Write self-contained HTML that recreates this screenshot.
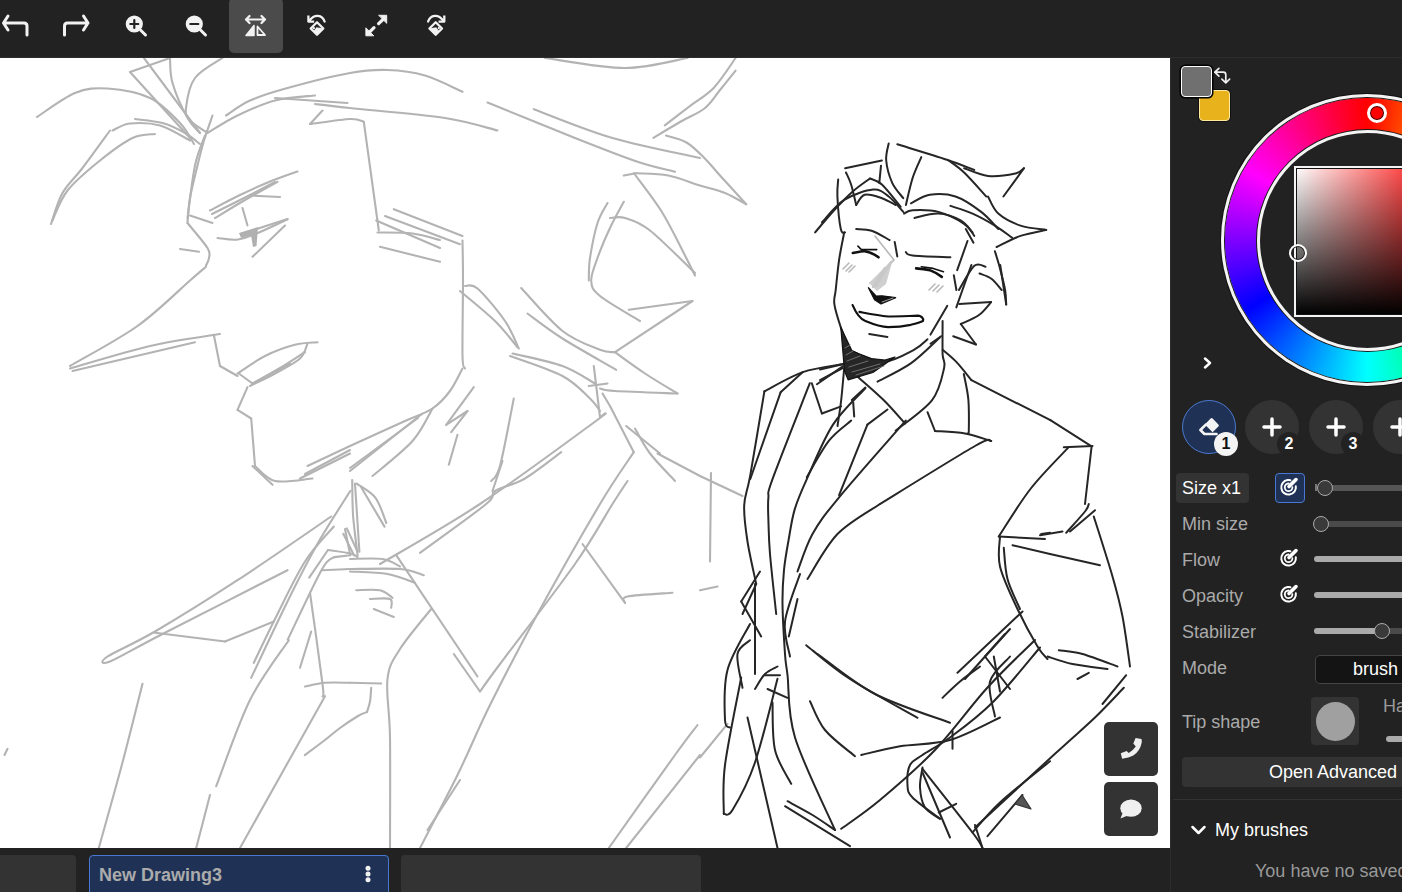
<!DOCTYPE html>
<html><head><meta charset="utf-8">
<style>
*{box-sizing:border-box;margin:0;padding:0}
html,body{width:1402px;height:892px;overflow:hidden;background:#222;font-family:"Liberation Sans",sans-serif;position:relative}
.abs{position:absolute}
#top{position:absolute;left:0;top:0;width:1402px;height:58px;background:#222;border-bottom:1px solid #2d2d2d}
.tb{position:absolute;top:-2px;width:54px;height:55px;border-radius:5px;background:#4b4b4b}
#canvas{position:absolute;left:0;top:58px;width:1170px;height:790px;background:#fff;overflow:hidden}
#side{position:absolute;left:1170px;top:58px;width:232px;height:834px;background:#222;border-left:1px solid #2c2c2c}
#bottom{position:absolute;left:0;top:848px;width:1170px;height:44px;background:#222}
.tab{position:absolute;top:7px;height:44px;background:#333;border-radius:4px}
.tab.act{background:#1f3256;border:1px solid #4a78d0}
.cbtn{position:absolute;left:1104px;width:54px;height:54px;background:#333;border-radius:5px}
.lbl{position:absolute;left:1182px;font-size:18px;color:#aaa;line-height:20px;white-space:nowrap}
.track{position:absolute;left:1314px;height:6px;border-radius:3px;background:#4a4a4a;width:120px}
.thumb{position:absolute;width:16px;height:16px;border-radius:50%;background:#3a3a3a;border:1.5px solid #aaa}
.slot{position:absolute;top:400px;width:54px;height:54px;border-radius:50%;background:#333}
.badge{position:absolute;top:432px;width:24px;height:24px;border-radius:50%;background:#222;color:#fff;font-weight:bold;font-size:16px;text-align:center;line-height:24px}
</style></head><body>
<div id="top"></div>
<div class="tb" style="left:229px"></div>
<svg class="abs" style="left:0;top:0" width="460" height="58" fill="none" stroke="#f2f2f2" stroke-width="3" stroke-linecap="round" stroke-linejoin="round">
  <!-- undo -->
  <path d="M8 16 L3.5 23 L8 30 M3.5 23 H24 Q27 23 27 26 V35"/>
  <!-- redo -->
  <path d="M83.5 16 L88 23 L83.5 30 M88 23 H67.5 Q64.5 23 64.5 26 V35"/>
  <!-- zoom in -->
  <circle cx="134.3" cy="24" r="8.6" fill="#f2f2f2" stroke="none"/>
  <path d="M140.5 30 L145.5 35" />
  <path d="M134.3 20 V28 M130.3 24 H138.3" stroke="#222" stroke-width="2.2"/>
  <!-- zoom out -->
  <circle cx="194.3" cy="24" r="8.6" fill="#f2f2f2" stroke="none"/>
  <path d="M200.5 30 L205.5 35" />
  <path d="M190.3 24 H198.3" stroke="#222" stroke-width="2.2"/>
  <!-- flip -->
  <path d="M246 19.5 H265 M249.5 16 L246 19.5 L249.5 23 M261.5 16 L265 19.5 L261.5 23" stroke-width="2.2"/>
  <path d="M254 25.5 V35.5 H246 Z" fill="#f2f2f2" stroke-width="1.5"/>
  <path d="M257.5 26.5 V35 H265 Z" stroke-width="1.8"/>
  <!-- rotate ccw -->
  <g id="rot">
  <path d="M309.5 20.5 Q313 15.5 318 15.8 Q323 16.3 324.6 21.5" stroke-width="2.3"/>
  <path d="M308.4 16.6 V21.6 H313" stroke-width="2.3" stroke-linecap="square"/>
  <path d="M317 22.2 L323.3 28.5 L317 34.8 L310.7 28.5 Z" stroke-width="2.3"/>
  <path d="M323.3 28.5 L317 34.8 L313.5 31.3 L316.5 27.2 Z" fill="#f2f2f2" stroke="none"/>
  <circle cx="313.9" cy="28.2" r="1.1" fill="#f2f2f2" stroke="none"/>
  </g>
  <!-- fullscreen -->
  <path d="M379 15.3 H386.7 V22.9 Z" fill="#f2f2f2" stroke="#f2f2f2" stroke-width="1"/>
  <path d="M383.5 19 L378.6 23.6" stroke-width="3.2" stroke-linecap="round"/>
  <path d="M365.9 28.2 V35.8 H373.4 Z" fill="#f2f2f2" stroke="#f2f2f2" stroke-width="1"/>
  <path d="M374 27.6 L369.3 32.3" stroke-width="3.2" stroke-linecap="round"/>
  <!-- rotate cw -->
  <use href="#rot" transform="translate(752.7 0) scale(-1 1)"/>
</svg>

<div id="canvas">
<svg id="art" width="1170" height="790" viewBox="0 58 1170 790" style="position:absolute;left:0;top:0" fill="none" stroke-linecap="round" stroke-linejoin="round"><g stroke="#b3b3b3" stroke-width="2.1"><path d="M37.0 117.0 C43.3 113.0 63.2 97.8 75.0 93.0 C86.8 88.2 95.0 87.7 107.5 88.5 C120.0 89.3 137.9 92.2 150.0 98.0 C162.1 103.8 172.7 115.3 180.0 123.0 C187.3 130.7 191.7 140.5 194.0 144.0"/><path d="M170.0 58.0 L130.0 72.0"/><path d="M130.0 72.0 L190.0 138.0"/><path d="M144.0 58.0 L200.0 133.0"/><path d="M170.0 58.0 C170.4 62.2 169.6 73.0 172.5 83.0 C175.4 93.0 182.9 109.7 187.5 118.0 C192.1 126.3 197.9 130.5 200.0 133.0"/><path d="M222.5 58.0 C217.9 61.3 201.1 69.7 195.0 78.0 C188.9 86.3 186.8 100.9 186.0 108.0 C185.2 115.1 186.4 116.3 190.0 120.5 C193.6 124.7 204.6 130.9 207.5 133.0"/><path d="M135.0 119.0 C139.6 119.7 154.2 120.7 162.5 123.0 C170.8 125.3 178.8 129.5 185.0 133.0 C191.2 136.5 197.5 142.2 200.0 144.0"/><path d="M112.5 130.5 C115.4 129.3 122.1 124.3 130.0 123.5 C137.9 122.7 150.0 122.7 160.0 125.5 C170.0 128.3 185.0 138.0 190.0 140.5"/><path d="M110.0 130.5 C105.4 136.8 90.4 157.6 82.5 168.0 C74.6 178.4 67.8 183.7 62.5 193.0 C57.2 202.3 52.9 218.8 51.0 224.0"/><path d="M155.0 134.0 C151.2 134.7 141.7 133.6 132.5 138.0 C123.3 142.4 110.8 151.8 100.0 160.5 C89.2 169.2 75.4 180.5 67.5 190.5 C59.6 200.5 55.0 215.5 52.5 220.5"/><path d="M226.0 115.5 C230.0 113.0 239.8 105.1 250.0 100.5 C260.2 95.9 270.8 92.6 287.5 88.0 C304.2 83.4 333.3 76.0 350.0 73.0 C366.7 70.0 375.0 69.6 387.5 70.0 C400.0 70.4 412.5 71.9 425.0 75.5 C437.5 79.1 456.2 89.1 462.5 91.8"/><path d="M207.5 133.0 C212.5 130.1 226.2 120.9 237.5 115.5 C248.8 110.1 262.1 103.8 275.0 100.5 C287.9 97.2 308.3 96.3 315.0 95.5"/><path d="M315.0 104.0 C320.8 104.7 328.3 105.7 350.0 108.0 C371.7 110.3 420.4 114.2 445.0 118.0 C469.6 121.8 488.8 128.4 497.5 130.5"/><path d="M275.0 98.0 L347.5 103.0"/><path d="M322.5 110.5 L310.0 124.0"/><path d="M310.0 124.0 C316.7 123.2 341.0 119.4 350.0 119.0 C359.0 118.6 361.5 121.3 363.8 121.8"/><path d="M363.8 121.8 L378.8 230.5"/><path d="M212.5 115.5 C211.1 119.7 206.5 132.2 204.0 140.5 C201.5 148.8 199.8 155.9 197.5 165.5 C195.2 175.1 191.7 188.4 190.0 198.0 C188.3 207.6 187.9 218.8 187.5 223.0"/><path d="M187.5 223.0 C190.8 227.2 203.9 242.2 207.5 248.0 C211.1 253.8 209.2 255.1 209.0 258.0 C208.8 260.9 206.5 264.2 206.0 265.5"/><path d="M205.0 135.5 C203.3 140.5 197.9 151.8 195.0 165.5 C192.1 179.2 188.8 209.2 187.5 218.0"/><path d="M190.0 215.5 L212.5 223.0"/><path d="M210.0 210.5 C215.0 207.9 229.6 200.0 240.0 195.0 C250.4 190.0 262.9 184.4 272.5 180.5 C282.1 176.6 293.3 173.0 297.5 171.5"/><path d="M215.0 218.0 C220.0 215.0 234.6 206.0 245.0 200.0 C255.4 194.0 272.1 184.8 277.5 181.8"/><path d="M212.0 214.0 C218.3 210.8 239.5 200.3 250.0 195.0 C260.5 189.7 270.8 184.2 275.0 182.0"/><path d="M250.0 195.5 L280.0 197.0"/><path d="M242.5 208.0 L247.5 225.5"/><path d="M217.5 238.0 C220.9 238.2 230.9 240.5 238.0 239.5 C245.1 238.5 251.7 235.4 260.0 232.0 C268.3 228.6 283.0 221.3 287.6 219.2"/><path d="M244.0 233.0 L287.5 219.0"/><path d="M252.5 256.8 L285.0 225.5"/><path d="M180.0 249.0 L199.0 251.8"/><path d="M206.0 266.8 C203.3 269.1 201.4 270.6 190.0 280.5 C178.6 290.4 157.5 311.8 137.5 326.0 C117.5 340.2 81.2 359.3 70.0 366.0"/><path d="M545.0 58.0 C558.3 59.7 601.2 68.0 625.0 68.0 C648.8 68.0 677.1 59.7 687.5 58.0"/><path d="M487.5 102.5 C502.1 108.4 550.0 128.1 575.0 138.0 C600.0 147.9 620.8 156.1 637.5 161.8 C654.2 167.4 668.8 170.1 675.0 171.8"/><path d="M533.8 109.2 C546.9 114.0 584.8 129.9 612.5 138.0 C640.2 146.1 685.4 154.7 700.0 158.0"/><path d="M664.8 125.3 C669.0 122.1 681.8 112.3 690.0 106.0 C698.2 99.7 706.3 95.7 713.9 87.7 C721.5 79.7 732.0 63.0 735.6 58.0"/><path d="M653.4 137.9 C657.8 135.2 671.4 127.0 680.0 122.0 C688.6 117.0 698.1 113.5 704.8 108.2 C711.5 102.9 714.9 96.3 720.0 90.0 C725.1 83.7 733.0 73.8 735.6 70.6"/><path d="M666.0 135.6 C669.4 136.8 680.0 138.7 686.5 142.5 C693.0 146.3 699.2 152.9 704.8 158.4 C710.4 163.9 713.1 167.9 720.0 175.5 C726.9 183.1 741.9 199.5 746.2 204.2"/><path d="M623.7 175.5 L636.3 173.3"/><path d="M636.3 173.3 C641.6 173.7 657.7 173.5 668.3 175.5 C678.9 177.5 690.5 182.6 700.0 185.5 C709.5 188.4 717.3 189.9 725.0 193.0 C732.7 196.1 742.7 202.4 746.2 204.2"/><path d="M633.8 173.0 C638.5 179.7 654.0 199.2 662.5 213.0 C671.0 226.8 679.6 245.1 685.0 255.5 C690.4 265.9 693.3 272.2 695.0 275.5"/><path d="M610.0 218.0 C612.5 218.0 618.3 215.9 625.0 218.0 C631.7 220.1 638.3 221.3 650.0 230.5 C661.7 239.7 687.5 265.9 695.0 273.0"/><path d="M607.5 203.0 C605.8 206.3 600.4 213.8 597.5 223.0 C594.6 232.2 591.5 248.4 590.0 258.0 C588.5 267.6 589.0 276.8 588.8 280.5"/><path d="M623.8 201.8 C621.5 206.1 614.4 218.6 610.0 228.0 C605.6 237.4 600.6 249.2 597.5 258.0 C594.4 266.8 590.8 274.7 591.2 281.0 C591.7 287.3 591.9 289.3 600.0 296.0 C608.1 302.7 633.3 316.8 640.0 321.0"/><path d="M393.8 209.2 L462.5 236.0"/><path d="M385.0 216.0 L460.0 244.2"/><path d="M376.2 220.5 L440.0 248.0"/><path d="M377.5 232.5 C383.3 232.7 402.1 232.2 412.5 233.5 C422.9 234.8 435.4 238.9 440.0 240.0"/><path d="M380.0 246.8 L440.0 261.8"/><path d="M70.0 368.5 C83.3 364.8 125.0 351.8 150.0 346.0 C175.0 340.2 208.3 336.0 220.0 334.0"/><path d="M72.5 371.0 L195.0 342.2"/><path d="M213.8 334.8 L220.0 366.0"/><path d="M220.0 366.0 L237.5 376.0"/><path d="M237.5 373.5 C242.1 370.6 255.4 360.8 265.0 356.0 C274.6 351.2 286.2 347.0 295.0 344.8 C303.8 342.5 313.8 342.7 317.5 342.2"/><path d="M250.0 386.0 C254.2 383.9 266.7 378.1 275.0 373.5 C283.3 368.9 294.6 363.5 300.0 358.5 C305.4 353.5 306.2 346.0 307.5 343.5"/><path d="M252.0 384.0 C256.7 381.3 271.2 373.3 280.0 368.0 C288.8 362.7 300.8 354.7 305.0 352.0"/><path d="M238.8 373.5 L252.5 383.5"/><path d="M252.5 383.5 L290.0 363.5"/><path d="M247.5 387.2 L237.5 409.8"/><path d="M237.5 409.8 L251.2 418.5"/><path d="M251.2 418.5 L255.0 466.0"/><path d="M255.0 466.0 C258.3 468.5 265.4 478.9 275.0 481.0 C284.6 483.1 306.2 478.9 312.5 478.5"/><path d="M252.5 466.0 L272.5 484.8"/><path d="M300.0 478.5 L350.0 453.5"/><path d="M305.0 474.0 L350.0 450.0"/><path d="M462.5 240.5 C462.6 247.2 463.0 261.2 463.0 280.5 C463.0 299.8 462.2 341.3 462.5 356.0 C462.8 370.7 464.6 366.4 465.0 368.5"/><path d="M460.0 291.0 C465.8 296.0 485.4 311.6 495.0 321.0 C504.6 330.4 513.8 342.9 517.5 347.2"/><path d="M465.0 286.0 C467.1 286.4 470.8 282.7 477.5 288.5 C484.2 294.3 498.1 311.0 505.0 321.0 C511.9 331.0 516.5 343.9 518.8 348.5"/><path d="M521.2 288.0 C528.1 295.2 549.4 320.7 562.5 331.0 C575.6 341.3 591.2 346.2 600.0 349.8 C608.8 353.3 612.5 351.8 615.0 352.2"/><path d="M615.0 352.2 L692.5 301.0"/><path d="M692.5 301.0 L628.8 309.8"/><path d="M527.5 313.5 C533.3 317.7 547.7 329.1 562.5 338.5 C577.3 347.9 607.3 364.5 616.2 369.8"/><path d="M615.0 352.2 C620.0 355.8 634.6 366.6 645.0 373.5 C655.4 380.4 672.1 390.2 677.5 393.5"/><path d="M677.5 393.5 C667.1 393.1 627.9 391.8 615.0 391.0 C602.1 390.2 602.5 388.9 600.0 388.5"/><path d="M512.5 353.5 C520.8 355.6 548.8 361.0 562.5 366.0 C576.2 371.0 589.6 380.6 595.0 383.5"/><path d="M510.0 356.0 C518.8 359.3 549.2 368.9 562.5 376.0 C575.8 383.1 583.8 392.7 590.0 398.5 C596.2 404.3 598.3 408.9 600.0 411.0"/><path d="M593.8 366.0 L600.0 417.2"/><path d="M600.0 417.2 L605.0 413.5"/><path d="M588.8 386.0 L607.5 383.5"/><path d="M462.5 368.5 C460.4 372.2 455.0 384.3 450.0 391.0 C445.0 397.7 440.0 403.5 432.5 408.5 C425.0 413.5 418.8 414.8 405.0 421.0 C391.2 427.2 366.2 438.5 350.0 446.0 C333.8 453.5 314.6 462.7 307.5 466.0"/><path d="M432.5 408.5 C429.2 413.9 422.5 429.8 412.5 441.0 C402.5 452.2 379.2 470.2 372.5 476.0"/><path d="M422.5 413.5 L350.0 471.0"/><path d="M418.0 418.0 L350.0 468.0"/><path d="M473.8 387.2 L446.2 424.8"/><path d="M446.2 424.8 L467.5 411.0"/><path d="M467.5 411.0 L451.2 432.2"/><path d="M457.5 434.8 L448.8 464.8"/><path d="M513.8 398.5 C511.5 409.8 503.8 452.2 500.0 466.0 C496.2 479.8 492.7 478.5 491.2 481.0"/><path d="M605.0 413.5 C602.9 415.2 613.3 408.4 592.5 423.5 C571.7 438.6 515.4 480.6 480.0 504.0 C444.6 527.4 396.7 554.0 380.0 564.0"/><path d="M561.2 452.2 C555.2 456.6 536.0 472.0 525.0 478.5 C514.0 485.0 501.5 486.8 495.0 491.0 C488.5 495.2 498.8 493.7 486.2 504.0 C473.8 514.3 431.0 544.6 420.0 552.8"/><path d="M610.0 406.0 L633.8 452.2"/><path d="M633.8 452.2 C628.1 460.9 616.0 477.0 600.0 504.0 C584.0 531.0 555.8 580.5 537.5 614.0 C519.2 647.5 503.3 678.2 490.0 705.0 C476.7 731.8 469.2 751.2 457.5 775.0 C445.8 798.8 426.2 835.8 420.0 848.0"/><path d="M602.5 393.5 L610.0 406.0"/><path d="M626.2 426.0 L660.0 453.5"/><path d="M635.0 428.5 C637.5 432.7 643.3 444.8 650.0 453.5 C656.7 462.2 670.8 476.4 675.0 481.0"/><path d="M657.5 453.5 L700.0 476.0"/><path d="M356.7 483.6 C359.8 486.0 370.6 491.3 375.5 497.9 C380.4 504.5 384.5 518.8 386.3 523.0"/><path d="M361.2 487.2 L384.5 526.6"/><path d="M502.5 461.0 L492.5 491.0"/><path d="M700.0 476.0 L742.5 496.0"/><path d="M711.0 473.0 L710.0 561.5"/><path d="M700.0 590.2 L717.5 586.5"/><path d="M727.5 723.8 L700.0 757.5"/><path d="M331.2 516.5 C315.6 527.1 266.9 561.1 237.5 580.2 C208.1 599.4 176.7 618.8 155.0 631.5 C133.3 644.2 115.0 651.5 107.5 656.5 C100.0 661.5 100.8 665.2 110.0 661.5 C119.2 657.8 132.9 649.2 162.5 634.0 C192.1 618.8 266.7 580.9 287.5 570.2"/><path d="M155.0 632.8 L225.0 641.5"/><path d="M225.0 641.5 L273.8 621.5"/><path d="M350.4 490.8 C345.0 499.5 328.6 524.3 318.1 542.8 C307.6 561.2 298.6 579.0 287.5 601.5 C276.4 624.0 257.3 665.0 251.2 677.8"/><path d="M333.8 526.5 C329.0 532.3 314.8 546.1 305.0 561.5 C295.2 576.9 283.5 602.1 275.0 619.0 C266.5 635.9 257.3 655.5 253.8 662.8"/><path d="M328.0 550.0 C331.7 550.6 345.5 552.3 350.4 553.5 C355.3 554.7 356.4 556.5 357.6 557.1"/><path d="M328.0 550.0 L309.2 577.7"/><path d="M310.0 592.8 C312.1 608.0 320.4 666.7 322.5 684.0 C324.6 701.3 322.5 694.4 322.5 696.5"/><path d="M311.2 631.5 L300.0 667.8"/><path d="M288.8 640.2 C282.3 650.2 262.1 675.7 250.0 700.0 C237.9 724.3 221.9 771.9 216.2 786.2"/><path d="M305.0 686.5 C308.3 685.9 317.5 683.4 325.0 682.8 C332.5 682.1 345.8 682.8 350.0 682.8"/><path d="M325.0 696.2 L240.0 848.0"/><path d="M142.5 683.8 C139.2 696.9 129.8 735.1 122.5 762.5 C115.2 789.9 102.7 833.8 98.8 848.0"/><path d="M345.0 529.0 L350.0 554.0"/><path d="M322.5 570.2 L350.0 569.0"/><path d="M210.0 795.0 L196.2 848.0"/><path d="M7.5 748.8 L4.5 755.0"/><path d="M334.3 557.1 L350.4 555.3"/><path d="M334.3 557.1 C332.2 559.2 329.5 556.0 321.7 569.7 C313.9 583.5 293.4 628.0 287.7 639.6"/><path d="M343.3 533.8 L354.0 555.3"/><path d="M346.8 528.4 L357.6 551.7"/><path d="M350.0 559.0 C355.4 559.0 374.2 557.8 382.5 559.0 C390.8 560.2 397.1 565.2 400.0 566.5"/><path d="M350.0 569.0 C358.3 569.0 387.7 568.0 400.0 569.0 C412.3 570.0 419.8 574.2 423.8 575.2"/><path d="M350.0 571.5 C356.2 571.9 376.7 572.1 387.5 574.0 C398.3 575.9 410.4 581.3 415.0 582.8"/><path d="M396.2 555.2 L477.5 676.5"/><path d="M453.8 654.0 L480.0 691.5"/><path d="M480.0 691.5 C483.3 686.9 484.2 685.2 500.0 664.0 C515.8 642.8 556.2 590.7 575.0 564.0 C593.8 537.3 603.8 517.8 612.5 504.0 C621.2 490.2 625.0 484.8 627.5 481.0"/><path d="M582.5 544.0 L625.0 602.8"/><path d="M625.0 602.8 C625.4 601.7 619.6 598.2 627.5 596.5 C635.4 594.8 665.0 593.4 672.5 592.8"/><path d="M356.2 590.2 C360.2 590.2 374.0 589.0 380.0 590.2 C386.0 591.5 390.4 596.5 392.5 597.8"/><path d="M370.0 599.0 C373.3 599.0 386.5 597.5 390.0 599.0 C393.5 600.5 391.0 606.3 391.2 607.8"/><path d="M373.8 609.0 L393.8 617.0"/><path d="M431.2 609.0 C426.0 615.7 407.3 637.3 400.0 649.0 C392.7 660.7 389.2 664.2 387.5 679.0 C385.8 693.8 389.6 709.3 390.0 737.5 C390.4 765.7 390.0 829.6 390.0 848.0"/><path d="M350.0 682.8 L381.2 683.5"/><path d="M371.2 687.8 C371.0 690.0 370.7 697.5 370.0 701.5 C369.3 705.5 367.5 710.2 367.0 712.0"/><path d="M367.0 712.0 C365.5 712.7 362.5 713.3 358.0 716.0 C353.5 718.7 345.5 724.0 340.0 728.0 C334.5 732.0 330.9 735.5 325.0 740.0 C319.1 744.5 308.2 752.7 304.8 755.2"/><path d="M352.2 480.0 C352.4 486.0 352.2 503.3 353.1 515.9 C354.0 528.4 356.9 548.7 357.6 555.3"/><path d="M355.0 483.6 L359.4 551.7"/><path d="M460.0 780.0 L427.5 830.0"/><path d="M697.5 725.0 C693.8 730.0 689.8 734.5 675.0 755.0 C660.2 775.5 619.8 832.5 608.8 848.0"/><path d="M700.0 755.0 L626.2 848.0"/></g><g stroke="#262626" stroke-width="2"><path d="M815.1 232.4 C818.5 228.4 829.4 215.3 835.7 208.5 C842.0 201.7 847.1 196.4 852.8 191.4 C858.5 186.4 867.0 180.7 869.9 178.5"/><path d="M869.9 178.5 C871.9 179.5 876.8 179.8 881.9 184.5 C887.0 189.2 897.6 203.1 900.7 206.8"/><path d="M822.0 222.2 C825.7 218.5 835.7 205.3 844.2 199.9 C852.8 194.5 865.9 190.2 873.3 189.6 C880.7 189.0 883.7 192.8 888.7 196.5 C893.7 200.2 900.9 209.3 903.3 211.9"/><path d="M838.2 179.4 C838.1 182.2 837.0 188.2 837.4 196.5 C837.8 204.8 839.5 223.0 840.8 229.0 C842.1 235.0 844.4 231.8 845.1 232.4"/><path d="M846.0 172.5 C846.9 174.5 849.4 179.1 851.1 184.5 C852.8 189.9 855.4 201.6 856.2 205.0"/><path d="M856.2 205.0 C857.6 203.3 860.5 195.9 864.8 194.8 C869.1 193.7 876.8 196.5 881.9 198.2 C887.0 199.9 893.3 203.9 895.6 205.0"/><path d="M845.1 168.2 L881.9 160.5"/><path d="M881.0 165.7 L879.3 182.8"/><path d="M888.7 143.4 C888.3 146.2 885.6 153.9 886.2 160.5 C886.8 167.1 889.4 176.5 892.2 182.8 C895.1 189.1 901.4 195.6 903.3 198.2"/><path d="M921.3 157.1 C919.9 160.5 915.3 169.7 912.7 177.7 C910.1 185.7 907.0 200.4 905.9 205.0"/><path d="M897.3 144.3 C905.6 146.9 934.1 155.4 946.9 159.7 C959.7 164.0 969.7 168.3 974.3 170.0"/><path d="M948.7 160.5 C951.3 162.5 957.8 166.5 964.1 172.5 C970.4 178.5 982.6 192.5 986.3 196.5"/><path d="M964.1 168.2 C968.1 169.5 979.5 175.0 988.0 175.9 C996.5 176.8 1009.4 174.7 1015.4 173.4 C1021.4 172.1 1022.6 169.1 1024.0 168.2"/><path d="M1024.0 168.2 L1003.4 196.5"/><path d="M911.0 203.3 C914.1 201.9 922.4 195.9 929.8 194.8 C937.2 193.7 946.9 193.7 955.5 196.5 C964.1 199.3 974.1 206.5 981.2 211.9 C988.3 217.3 995.4 226.2 998.3 229.0"/><path d="M988.0 196.5 C989.7 199.3 992.9 208.8 998.3 213.6 C1003.7 218.4 1012.5 222.9 1020.5 225.6 C1028.5 228.3 1041.9 229.2 1046.2 229.9"/><path d="M1046.2 229.9 C1041.9 230.9 1028.8 233.1 1020.5 235.9 C1012.2 238.8 1000.6 245.2 996.6 247.0"/><path d="M950.4 205.9 C954.1 207.2 965.2 210.3 972.6 213.6 C980.0 216.9 988.3 221.6 994.9 225.6 C1001.5 229.6 1009.1 235.6 1012.0 237.6"/><path d="M904.1 213.6 C905.5 213.0 907.0 210.5 912.7 210.2 C918.4 209.9 929.8 209.6 938.4 211.9 C947.0 214.2 958.1 219.9 964.1 223.9 C970.1 227.9 972.6 233.9 974.3 235.9"/><path d="M914.4 217.9 C918.4 217.2 930.7 213.2 938.4 213.6 C946.1 214.0 954.9 217.4 960.6 220.5 C966.3 223.6 970.6 230.4 972.6 232.4"/><path d="M844.2 232.4 C843.4 237.0 840.5 250.2 839.1 259.8 C837.7 269.4 836.5 282.6 835.7 290.0 C834.9 297.4 833.5 298.0 834.4 304.4 C835.3 310.8 838.6 320.8 841.2 328.6 C843.9 336.4 848.0 347.3 850.3 351.3 C852.6 355.3 854.0 352.6 854.8 352.8"/><path d="M856.2 229.0 C858.8 229.3 866.0 228.8 871.6 230.7 C877.2 232.5 886.6 238.5 889.6 240.1"/><path d="M894.7 241.9 L897.3 256.4"/><path d="M905.9 252.1 C907.0 252.7 905.3 254.6 912.7 255.5 C920.1 256.4 944.1 257.0 950.4 257.3"/><path d="M967.5 241.0 L957.2 270.1"/><path d="M965.8 229.0 L973.5 242.7"/><path d="M994.9 251.3 C995.8 254.2 998.3 261.9 1000.0 268.4 C1001.7 274.8 1004.1 284.0 1005.1 290.0 C1006.1 296.0 1006.0 302.0 1006.2 304.4"/><path d="M1000.2 265.0 L1006.2 304.4"/><path d="M958.9 290.0 C961.5 286.0 969.9 269.7 974.3 265.8 C978.7 261.9 983.6 266.6 985.5 266.7"/><path d="M979.5 273.5 C981.5 274.4 987.7 275.9 991.4 278.7 C995.1 281.4 1000.0 288.1 1001.7 290.0"/><path d="M953.8 275.2 L956.4 290.0"/><path d="M971.4 265.0 C970.1 268.5 966.3 279.1 963.8 286.2 C961.3 293.3 957.5 303.9 956.3 307.4"/><path d="M854.8 352.8 C859.6 354.3 873.8 362.4 883.6 361.9 C893.5 361.4 906.6 353.6 913.9 349.8 C921.2 346.0 925.2 341.0 927.5 339.2"/><path d="M930.5 343.7 L941.1 336.2"/><path d="M869.2 333.9 L887.4 336.9"/><path d="M877.5 381.6 C883.0 378.6 900.4 370.7 910.8 363.4 C921.1 356.1 934.8 342.0 939.6 337.7"/><path d="M947.2 305.9 L930.5 334.6"/><path d="M942.6 321.0 C942.6 326.6 942.4 346.5 942.6 354.3 C942.9 362.1 945.9 360.3 944.1 368.0 C942.3 375.7 940.0 389.9 931.9 400.4 C923.8 410.8 901.6 425.6 895.6 430.7"/><path d="M942.6 349.8 C944.9 351.8 951.5 356.8 956.3 361.9 C961.1 366.9 968.9 377.1 971.4 380.1"/><path d="M971.4 380.1 L1050.4 420.2"/><path d="M1050.4 420.2 L1091.6 446.3"/><path d="M1091.6 446.3 L1085.0 504.0"/><path d="M963.8 374.0 C964.6 378.3 967.6 390.5 968.4 400.0 C969.2 409.5 968.9 425.4 968.8 431.0 C968.6 436.6 967.7 433.1 967.5 433.5"/><path d="M959.3 304.1 L991.1 302.1"/><path d="M991.1 302.1 C989.1 304.2 984.0 311.4 979.0 315.0 C974.0 318.6 963.8 322.5 960.8 324.0"/><path d="M960.8 324.0 L976.0 344.5"/><path d="M976.0 344.5 L953.2 336.2"/><path d="M820.0 369.5 L842.7 364.2"/><path d="M820.0 380.1 L842.7 368.0"/><path d="M844.2 368.0 C843.7 373.3 842.3 390.3 841.2 400.0 C840.1 409.7 838.1 421.7 837.5 426.0"/><path d="M856.3 375.5 C860.8 379.6 875.5 392.0 883.6 400.0 C891.7 408.0 901.4 419.6 905.0 423.5"/><path d="M865.4 387.6 L851.8 400.0"/><path d="M843.1 364.0 C836.4 365.4 815.9 367.6 802.8 372.1 C789.7 376.7 770.8 388.1 764.4 391.3"/><path d="M764.4 391.3 C762.0 405.3 753.7 456.1 750.3 475.1 C746.9 494.1 744.7 494.2 744.2 505.3 C743.7 516.4 745.5 528.4 747.5 541.5 C749.5 554.6 754.8 576.9 756.2 584.0"/><path d="M802.8 372.1 L780.6 392.3"/><path d="M780.6 392.3 L750.3 479.0"/><path d="M809.8 383.2 C803.6 399.2 779.4 460.1 772.5 479.1 C765.6 498.1 769.1 490.5 768.4 497.3 C767.7 504.1 768.1 510.6 768.4 520.0 C768.7 529.5 768.7 538.3 770.0 554.0 C771.3 569.7 775.2 604.0 776.2 614.0"/><path d="M811.8 383.2 L821.9 413.5"/><path d="M821.9 413.5 L841.1 406.4"/><path d="M853.2 402.4 L854.2 416.5"/><path d="M816.9 384.2 L843.1 366.1"/><path d="M865.3 388.3 C859.9 394.4 842.8 409.5 833.0 424.6 C823.2 439.7 813.2 465.0 806.8 479.1 C800.4 493.2 797.7 499.2 794.7 509.4 C791.7 519.5 790.4 529.9 788.6 540.0 C786.8 550.1 785.0 559.3 784.0 570.0 C783.0 580.7 782.3 590.0 782.5 604.0 C782.7 618.0 784.2 642.2 785.0 654.0 C785.8 665.8 785.8 661.1 787.5 675.0 C789.2 688.9 787.1 711.7 795.0 737.5 C802.9 763.3 828.3 814.6 835.0 830.0"/><path d="M851.2 420.6 C847.5 424.0 836.4 431.3 829.0 440.7 C821.6 450.1 810.5 471.0 806.8 477.1"/><path d="M887.5 409.5 L867.4 424.6"/><path d="M867.4 424.6 L839.1 495.2"/><path d="M905.7 420.6 C894.6 433.4 854.6 478.4 839.1 497.3 C823.6 516.2 819.4 521.6 812.5 534.0 C805.6 546.4 800.0 565.2 797.5 571.5"/><path d="M927.5 412.2 L935.0 431.0"/><path d="M935.0 431.0 C940.0 431.4 955.6 431.8 965.0 433.5 C974.4 435.2 986.9 439.8 991.2 441.0"/><path d="M991.2 441.0 C988.5 441.8 993.5 435.5 975.0 446.0 C956.5 456.5 895.8 494.3 880.0 504.0"/><path d="M1063.8 447.2 L1092.5 446.0"/><path d="M1068.3 447.6 C1062.0 454.4 1042.4 473.7 1030.8 488.5 C1019.2 503.3 1004.1 528.5 998.8 536.5"/><path d="M998.8 536.5 L1045.0 539.0"/><path d="M760.0 571.5 L741.2 601.5"/><path d="M741.2 601.5 L761.2 636.5"/><path d="M756.2 584.0 L742.5 614.0"/><path d="M755.0 584.0 L755.0 674.0"/><path d="M880.0 504.0 C872.9 509.0 849.6 521.5 837.5 534.0 C825.4 546.5 812.5 571.5 807.5 579.0"/><path d="M800.0 574.0 C797.5 581.9 786.7 607.8 785.0 621.5 C783.3 635.2 789.2 650.7 790.0 656.5"/><path d="M797.5 599.0 L788.8 636.5"/><path d="M750.0 624.0 C746.2 631.7 731.7 654.0 727.5 670.0 C723.3 686.0 724.6 710.4 725.0 720.0 C725.4 729.6 729.2 726.2 730.0 727.5"/><path d="M750.0 640.2 C747.9 642.5 738.8 646.1 737.5 654.0 C736.2 661.9 741.7 682.1 742.5 687.8"/><path d="M741.2 677.5 C738.5 692.1 727.9 742.3 725.0 765.0 C722.1 787.7 724.0 805.6 723.8 813.8"/><path d="M723.8 813.8 C725.2 813.1 727.3 818.5 732.5 810.0 C737.7 801.5 747.5 784.4 755.0 762.5 C762.5 740.6 773.8 692.7 777.5 678.8"/><path d="M777.5 666.5 C775.4 667.8 768.8 670.2 765.0 674.0 C761.2 677.8 756.7 686.5 755.0 689.0"/><path d="M765.0 675.2 L780.0 675.2"/><path d="M767.5 689.0 L787.5 697.8"/><path d="M747.5 717.5 L777.5 848.0"/><path d="M772.5 702.5 C772.9 710.4 771.9 736.5 775.0 750.0 C778.1 763.5 788.5 778.1 791.2 783.8"/><path d="M806.2 645.2 C813.5 650.9 831.5 666.9 850.0 679.0 C868.5 691.1 906.2 711.3 917.5 717.8"/><path d="M817.5 654.0 C827.1 660.7 852.9 682.5 875.0 694.0 C897.1 705.5 937.5 718.0 950.0 722.8"/><path d="M810.0 701.2 C812.5 706.0 817.5 720.8 825.0 730.0 C832.5 739.2 850.0 751.9 855.0 756.2"/><path d="M1012.5 545.2 L1050.0 554.0"/><path d="M1000.0 536.5 C1000.0 541.5 997.1 554.4 1000.0 566.5 C1002.9 578.6 1011.2 595.7 1017.5 609.0 C1023.8 622.3 1032.5 638.2 1037.5 646.5 C1042.5 654.8 1045.8 656.9 1047.5 659.0"/><path d="M1003.8 547.8 C1004.4 553.0 1004.8 568.8 1007.5 579.0 C1010.2 589.2 1017.9 604.0 1020.0 609.0"/><path d="M1022.5 611.5 L957.5 672.8"/><path d="M1005.0 634.0 L965.0 679.0"/><path d="M1010.0 629.0 L985.0 656.5"/><path d="M1035.0 640.0 C1027.1 647.9 1004.2 669.2 987.5 687.5 C970.8 705.8 952.9 731.2 935.0 750.0 C917.1 768.8 895.6 786.9 880.0 800.0 C864.4 813.1 847.7 824.0 841.2 828.8"/><path d="M1040.0 647.5 C1032.1 656.7 1007.5 687.5 992.5 702.5 C977.5 717.5 961.7 728.8 950.0 737.5 C938.3 746.2 929.2 750.4 922.5 755.0 C915.8 759.6 912.5 760.0 910.0 765.0 C907.5 770.0 907.1 779.6 907.5 785.0 C907.9 790.4 907.1 791.9 912.5 797.5 C917.9 803.1 935.4 815.2 940.0 818.8"/><path d="M980.0 666.5 C976.7 669.0 966.2 676.3 960.0 681.5 C953.8 686.7 945.4 695.0 942.5 697.8"/><path d="M985.0 656.5 L1010.0 689.0"/><path d="M993.8 656.5 L1000.0 691.5"/><path d="M1010.0 656.5 C1006.7 660.7 992.5 671.5 990.0 681.5 C987.5 691.5 994.2 710.7 995.0 716.5"/><path d="M1041.2 534.0 L1050.0 532.8"/><path d="M1088.8 504.0 C1088.1 505.2 1088.8 506.7 1085.0 511.5 C1081.2 516.3 1069.4 529.2 1066.2 532.8"/><path d="M1095.0 510.2 L1070.0 531.5"/><path d="M1040.0 535.2 L1062.5 531.5"/><path d="M1093.8 516.5 C1096.9 526.5 1107.7 559.8 1112.5 576.5 C1117.3 593.2 1119.6 601.5 1122.5 616.5 C1125.4 631.5 1128.8 658.2 1130.0 666.5"/><path d="M1058.8 650.2 C1062.7 650.9 1072.7 651.3 1082.5 654.0 C1092.3 656.7 1111.7 664.4 1117.5 666.5"/><path d="M1047.5 656.5 C1051.7 657.8 1062.5 661.9 1072.5 664.0 C1082.5 666.1 1101.7 668.2 1107.5 669.0"/><path d="M1077.5 679.0 L1088.8 672.8"/><path d="M1126.2 675.2 L1102.5 704.0"/><path d="M1123.8 687.8 C1119.0 692.7 1106.5 706.5 1095.0 717.5 C1083.5 728.5 1075.0 735.4 1055.0 753.8 C1035.0 772.1 988.3 815.2 975.0 827.5"/><path d="M1050.0 554.0 L1100.0 565.2"/><path d="M787.5 801.2 C791.7 803.5 804.6 810.2 812.5 815.0 C820.4 819.8 831.2 827.5 835.0 830.0"/><path d="M785.0 806.2 L850.0 846.2"/><path d="M861.2 755.0 C867.7 753.5 885.2 748.8 900.0 746.2 C914.8 743.8 933.3 744.8 950.0 740.0 C966.7 735.2 991.7 721.2 1000.0 717.5"/><path d="M922.5 767.5 C922.1 770.8 919.6 780.8 920.0 787.5 C920.4 794.2 921.7 802.3 925.0 807.5 C928.3 812.7 937.5 816.9 940.0 818.8"/><path d="M922.5 768.8 C930.8 779.4 962.5 819.3 972.5 832.5 C982.5 845.7 980.8 845.4 982.5 848.0"/><path d="M922.5 772.5 L950.0 837.5"/><path d="M938.8 812.5 L956.2 803.8"/><path d="M952.5 731.2 L952.5 748.8"/><path d="M1050.0 761.2 C1041.7 768.1 1012.9 790.6 1000.0 802.5 C987.1 814.4 977.1 827.5 972.5 832.5"/><path d="M1022.5 795.0 L987.5 836.2"/><path d="M975.0 825.0 L982.5 848.0"/></g><g fill="#111" stroke="#111" stroke-width="1">
<path d="M840.8 327.3 L851.8 350.6 L858.3 353.5 L871.4 358.6 L885 360 L895 357 L872.9 372.5 L848.1 379.8 L844.5 371 Z" fill="#262626" stroke-width="1.2"/>
<path d="M845 348 L850 345 M846 355 L853 351 M847 361 L860 356 M849 367 L868 361 M852 372 L880 364 M856 375 L884 366" stroke="#777" stroke-width="0.9" fill="none"/>
<path d="M868.4 287.7 L874.5 299.8 L881 304 L895.7 297.6 L882 295.8 L876 296 Z" stroke-width="1.2"/><path d="M882 302 L893 298" stroke="#fff" stroke-width="0.6"/>
<path d="M852.6 305.1 C856 313 860 319 865.4 321 C875 325 882 327 888.1 327.1 C898 327 905 326 910.8 324.8 C916 323.5 921 322 923 321 C924 318 921 316 918.4 315.7 C908 316 898 316.5 888.1 316.5 C878 315.5 868 313.5 859.4 311.9" fill="none" stroke-width="2.2"/>
<path d="M852.8 253 C858 252 862 251 864.8 251.3 C870 252 874 254 878.5 257.3" fill="none" stroke-width="2.6"/>
<path d="M857.9 246.1 L861.4 249.6 L876.8 249.6" fill="none" stroke-width="1.6"/>
<path d="M916.1 268.4 C922 269 926 269.5 929.8 270.1 C935 272 938 274 941.8 276.9" fill="none" stroke-width="2.6"/>
<path d="M921.3 266.7 L933.2 268.4 L943.5 271.8" fill="none" stroke-width="1.6"/>
</g>
<path d="M239 233 L258 227 L256.5 246 L253 247 L251 235 L241 238 Z" fill="#b0b0b0"/>
<path d="M1015 804 L1022 795 L1031 809 Z" fill="#555" stroke="#333" stroke-width="1.2"/>
<g stroke="#b8b8b8" fill="none" stroke-width="1.6">
<path d="M875 236 L894 260 L880 275 L870 283"/><path d="M869 283 L893 259 L886 284 L877 291 Z" fill="#cfcfcf" stroke="none"/>
<path d="M891 262 L878 282 M888 266 L876 286 M885 268 L873 287" stroke="#c8c8c8" stroke-width="2.5"/>
<path d="M843 269 L849 263 M846 271 L852 265 M849 272 L855 266"/>
<path d="M929 290 L935 284 M933 291 L939 285 M937 292 L943 286"/>
</g>
</svg>
</div>
<div class="cbtn" style="top:722px"></div>
<div class="cbtn" style="top:782px"></div>
<svg class="abs" style="left:1104px;top:722px" width="54" height="114" fill="#f0f0f0">
  <path d="M16.8 31.3 L22.6 29.1 L24.8 31.1 Q29 28.5 31.8 24.6 L29.3 21.5 L31.6 16.1 L37.4 17 Q38.2 19 37.6 21 Q36 29 29.3 33.6 Q25 36 18.1 36.7 Z"/>
  <ellipse cx="27" cy="86.2" rx="10.7" ry="8.6"/>
  <path d="M19 90 L16.5 96.5 L25 93 Z"/>
</svg>

<div id="side"></div>
<!-- swatches -->
<div class="abs" style="left:1199px;top:90px;width:31px;height:31px;background:#e8b21c;border:1px solid #ffe9a0;border-radius:4px;box-shadow:0 0 0 1px #111"></div>
<div class="abs" style="left:1181px;top:66px;width:31px;height:31px;background:#707070;border:1.5px solid #fff;border-radius:4px;box-shadow:0 0 0 1.5px #000"></div>
<svg class="abs" style="left:1212px;top:66px" width="22" height="22" fill="none" stroke="#f0f0f0" stroke-width="1.7" stroke-linecap="round" stroke-linejoin="round">
  <path d="M6.9 2.4 L2.8 6.2 L6.9 10.2 M2.8 6.2 H11.3 Q13.8 6.2 13.8 8.7 V16.6 M9.9 13.2 L13.8 16.8 L17.6 13.2"/>
</svg>
<!-- color wheel -->
<div class="abs" style="left:1225px;top:98.3px;width:284px;height:284px;border-radius:50%;background:conic-gradient(#f00,#ff0,#0f0,#0ff,#00f,#f0f,#f00);box-shadow:0 0 0 1px #1a1a1a,0 0 0 4px #f4f4f4,0 0 0 5px #111"></div>
<div class="abs" style="left:1256.5px;top:129.8px;width:221px;height:221px;border-radius:50%;background:#222;border:3.5px solid #f4f4f4;box-shadow:0 0 0 1px #1a1a1a"></div>
<div class="abs" style="left:1293.5px;top:166.3px;width:154px;height:150.5px;border:2px solid #f4f4f4;box-shadow:inset 0 0 0 1px #111;background:linear-gradient(to bottom,rgba(0,0,0,0),#000),linear-gradient(to right,#fff,#f00)"></div>
<div class="abs" style="left:1366.9px;top:102.8px;width:20.2px;height:20.2px;border-radius:50%;border:3px solid #fff;background:#f00;box-shadow:inset 0 0 0 1px #300"></div>
<div class="abs" style="left:1288.5px;top:243.5px;width:18px;height:18px;border-radius:50%;border:2px solid #fff;box-shadow:inset 0 0 0 1px #222"></div>
<svg class="abs" style="left:1200px;top:355px" width="16" height="16" fill="none" stroke="#fff" stroke-width="2.5" stroke-linecap="round" stroke-linejoin="round"><path d="M5 3.5 L10 8 L5 12.5"/></svg>

<!-- brush slots -->
<div class="slot" style="left:1182px;background:#1f3256;border:1px solid #4a78d0"></div>
<div class="slot" style="left:1245px"></div>
<div class="slot" style="left:1309px"></div>
<div class="slot" style="left:1373px"></div>
<svg class="abs" style="left:1170px;top:390px" width="232" height="70" fill="none" stroke="#fff" stroke-linecap="round" stroke-linejoin="round">
  <path d="M40.6 28.6 Q41.6 27.6 42.6 28.6 L48.4 34.4 Q49.4 35.4 48.4 36.4 L42.6 42.2 L34.8 34.4 Z" fill="#f4f4f4" stroke="none"/>
  <path d="M35.8 34.6 L30.4 40 L34.4 44 H46.5" stroke-width="2.6" stroke="#f4f4f4"/>
  <path d="M102 37 V29 M93.5 37 H110.5" stroke-width="0"/>
  <path d="M102 29 V45 M94 37 H110" stroke-width="3.5"/>
  <path d="M166 29 V45 M158 37 H174" stroke-width="3.5"/>
  <path d="M230 29 V45 M222 37 H238" stroke-width="3.5"/>
</svg>
<div class="badge" style="left:1214px;background:#f4f4f4;color:#111">1</div>
<div class="badge" style="left:1277px">2</div>
<div class="badge" style="left:1341px">3</div>

<!-- size row -->
<div class="abs" style="left:1176px;top:473px;width:73px;height:30px;background:#333;border-radius:4px"></div>
<div class="lbl" style="top:478px;color:#fff">Size x1</div>
<div class="abs" style="left:1275px;top:473px;width:30px;height:30px;background:#1f3256;border:1px solid #4a78d0;border-radius:4px"></div>
<div class="track" style="top:485px;left:1322px;background:#555"></div>
<div class="abs" style="left:1315px;top:484px;width:2px;height:7px;background:#777"></div>
<div class="thumb" style="left:1317px;top:480px"></div>

<div class="lbl" style="top:514px">Min size</div>
<div class="track" style="top:521px;left:1318px;background:#4a4a4a"></div>
<div class="thumb" style="left:1313px;top:516px"></div>

<div class="lbl" style="top:550px">Flow</div>
<div class="track" style="top:556px;background:#aaa"></div>
<div class="lbl" style="top:586px">Opacity</div>
<div class="track" style="top:592px;background:#aaa"></div>
<div class="lbl" style="top:622px">Stabilizer</div>
<div class="track" style="top:628px;background:#4a4a4a"></div>
<div class="track" style="top:628px;width:70px;background:#aaa"></div>
<div class="thumb" style="left:1374px;top:623px"></div>
<svg class="abs" style="left:1270px;top:470px" width="40" height="140" fill="none" stroke="#fff" stroke-linecap="round">
  <g id="pr"><circle cx="18.6" cy="17.3" r="7.3" stroke-width="2" stroke-dasharray="37 8.9" transform="rotate(-8 18.6 17.3)"/><circle cx="18.6" cy="17.3" r="3.8" stroke-width="1.8" stroke-dasharray="17.6 6.3" transform="rotate(-2 18.6 17.3)"/><path d="M19 16.6 L26 9.6" stroke-width="3.6"/></g>
  <use href="#pr" y="71"/>
  <use href="#pr" y="107"/>
</svg>

<div class="lbl" style="top:658px">Mode</div>
<div class="abs" style="left:1315px;top:655px;width:120px;height:29px;background:#141414;border:1px solid #444;border-radius:5px"></div>
<div class="abs" style="left:1353px;top:659px;font-size:18px;line-height:20px;color:#fff">brush</div>

<div class="lbl" style="top:712px">Tip shape</div>
<div class="abs" style="left:1311px;top:697px;width:48px;height:48px;background:#333;border-radius:4px"></div>
<div class="abs" style="left:1316px;top:702px;width:39px;height:39px;background:#a0a0a0;border-radius:50%"></div>
<div class="abs" style="left:1383px;top:696px;font-size:18px;line-height:20px;color:#999">Ha</div>
<div class="abs" style="left:1386px;top:735.5px;width:40px;height:6px;background:#aaa;border-radius:3px"></div>

<div class="abs" style="left:1182px;top:757px;width:240px;height:30px;background:#333;border-radius:4px"></div>
<div class="abs" style="left:1269px;top:762px;font-size:18px;line-height:20px;color:#fff;white-space:nowrap">Open Advanced</div>
<div class="abs" style="left:1173px;top:799px;width:229px;height:1px;background:#333"></div>
<svg class="abs" style="left:1189px;top:821px" width="20" height="20" fill="none" stroke="#fff" stroke-width="2.5" stroke-linecap="round" stroke-linejoin="round"><path d="M3.5 6 L9.5 12 L15.5 6"/></svg>
<div class="abs" style="left:1215px;top:820px;font-size:18px;line-height:20px;color:#fff;white-space:nowrap">My brushes</div>
<div class="abs" style="left:1255px;top:861px;font-size:18px;line-height:20px;color:#999;white-space:nowrap">You have no saved</div>

<div id="bottom">
  <div class="tab" style="left:-10px;width:86px"></div>
  <div class="tab act" style="left:89px;width:300px"></div>
  <div class="tab" style="left:401px;width:300px"></div>
</div>
<div class="abs" style="left:99px;top:865px;font-size:18px;line-height:20px;color:#ababab;font-weight:bold">New Drawing3</div>
<svg class="abs" style="left:360px;top:862px" width="16" height="26" fill="#f0f0f0"><circle cx="8" cy="6.2" r="2.5"/><circle cx="8" cy="12" r="2.5"/><circle cx="8" cy="17.8" r="2.5"/></svg>
</body></html>
